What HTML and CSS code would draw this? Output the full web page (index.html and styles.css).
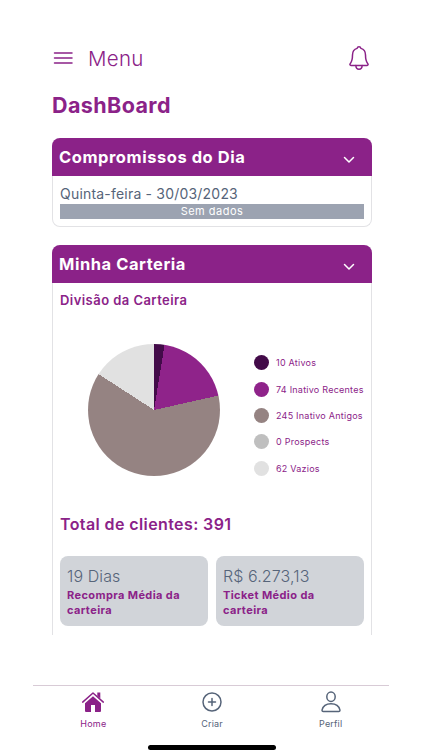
FILE: index.html
```html
<!DOCTYPE html>
<html lang="pt-BR">

<head>
    <meta charset="UTF-8">
    <meta name="viewport" content="width=device-width, initial-scale=1.0">
    <title>DashBoard</title>
    <link rel="stylesheet" href="styles.css">
</head>

<body>
    <div class="app">
        <header class="topbar">
            <svg class="menu-icon" width="20" height="14" viewBox="0 0 20 14">
                <path d="M1.500 1.900h17.500M1.500 7h17.500M1.500 12.100h17.500" />
            </svg>
            <span class="menu-title">Menu</span>
            <svg class="bell-icon" width="22" height="26" viewBox="0 0 22 26">
                <path d="M11 1.800c-1 0-1.700.7-1.900 1.600C6 4.300 4.500 6.800 4.500 10c0 5-.8 6.800-2.300 8.700-.6.800-.3 1.700.7 1.700h16.200c1 0 1.300-.9.700-1.700-1.500-1.900-2.300-3.700-2.300-8.700 0-3.200-1.500-5.700-4.600-6.600C12.700 2.500 12 1.800 11 1.800z" />
                <path d="M7.900 20.600c0 2.400 1.200 3.700 3.100 3.700s3.100-1.300 3.100-3.700" />
            </svg>
        </header>

        <main class="content">
            <h1>DashBoard</h1>

            <!-- Compromissos -->
            <section class="card">
                <div class="card-header">
                    <h2>Compromissos do Dia</h2>
                    <svg class="chevron" width="12" height="8" viewBox="0 0 12 8"><path d="M1.500 1.500L6 6l4.500-4.500" /></svg>
                </div>
                <div class="card-body">
                    <p class="date">Quinta-feira - 30/03/2023</p>
                    <p class="empty">Sem dados</p>
                </div>
            </section>

            <!-- Carteira -->
            <section class="card card-open">
                <div class="card-header">
                    <h2>Minha Carteria</h2>
                    <svg class="chevron" width="12" height="8" viewBox="0 0 12 8"><path d="M1.500 1.500L6 6l4.500-4.500" /></svg>
                </div>
                <div class="card-body">
                    <h3>Divisão da Carteira</h3>
                    <div class="chart">
                        <div class="pie"></div>
                        <ul class="legend">
                            <li><span class="dot ativos"></span>10 Ativos</li>
                            <li><span class="dot recentes"></span>74 Inativo Recentes</li>
                            <li><span class="dot antigos"></span>245 Inativo Antigos</li>
                            <li><span class="dot prospects"></span>0 Prospects</li>
                            <li><span class="dot vazios"></span>62 Vazios</li>
                        </ul>
                    </div>
                    <p class="total">Total de clientes: 391</p>
                    <div class="stats">
                        <div class="stat">
                            <p class="value">19 Dias</p>
                            <p class="label">Recompra Média da carteira</p>
                        </div>
                        <div class="stat">
                            <p class="value">R$ 6.273,13</p>
                            <p class="label">Ticket Médio da carteira</p>
                        </div>
                    </div>
                </div>
            </section>
        </main>

        <nav class="tabs">
            <a class="tab active">
                <svg width="24" height="24" viewBox="0 0 24 24">
                    <path class="fill" d="M12 6.300L4 13.200V21a1 1 0 0 0 1 1h5v-7h4v7h5a1 1 0 0 0 1-1v-7.800z" />
                    <path class="fill" d="M16.300 2.500h3v6l-3-2.600z" />
                    <path class="roof" d="M1.700 12.100L12 3l10.300 9.100" />
                </svg>
                <span>Home</span>
            </a>
            <a class="tab">
                <svg width="24" height="24" viewBox="0 0 24 24">
                    <circle cx="12" cy="12" r="9" />
                    <path d="M12 8.500v7M8.500 12h7" />
                </svg>
                <span>Criar</span>
            </a>
            <a class="tab">
                <svg width="24" height="24" viewBox="0 0 24 24">
                    <ellipse cx="12" cy="6.700" rx="4.200" ry="4.700" />
                    <path d="M12 13.700c-4.600 0-8.100 2.400-8.900 6.200-.2 1 .3 1.700 1.200 1.700h15.400c.9 0 1.400-.7 1.200-1.700-.8-3.800-4.300-6.200-8.900-6.200z" />
                </svg>
                <span>Perfil</span>
            </a>
        </nav>
        <div class="home-indicator"></div>
    </div>
</body>

</html>
```

FILE: styles.css
```css
* {
    box-sizing: border-box;
    margin: 0;
    padding: 0;
}

body {
    background-color: #fff;
    font-family: Inter, "Liberation Sans", sans-serif;
    color: #8b2288;
}

.app {
    display: flex;
    flex-direction: column;
    width: 356px;
    height: 750px;
    margin-left: 33px;
    overflow: hidden;
}

svg {
    fill: none;
    stroke: currentColor;
    stroke-width: 1.5;
    stroke-linecap: round;
    stroke-linejoin: round;
}

/* Top bar */
.topbar {
    display: flex;
    align-items: center;
    flex: none;
    height: 32px;
    margin-top: 42px;
    padding: 0 19px 0 20px;
}

.menu-title {
    margin-left: 15px;
    font-size: 20.5px;
    font-weight: 300;
    letter-spacing: 0.3px;
}

.bell-icon {
    margin-left: auto;
}

/* Content */
.content {
    height: 561px;
    padding: 0 17px 0 19px;
    overflow: hidden;
}

h1 {
    margin-top: 17px;
    font-size: 21.5px;
    line-height: 28px;
    font-weight: 700;
    letter-spacing: 0.4px;
}

.card {
    margin-top: 19px;
    border: 1px solid #e2e2e5;
    border-top: none;
    border-radius: 8px;
}

.card-header {
    display: flex;
    align-items: center;
    justify-content: space-between;
    height: 38px;
    margin: 0 -1px;
    padding: 0 17px 0 7px;
    border-radius: 8px 8px 0 0;
    background-color: #8b2288;
    color: #fff;
}

.card-header h2 {
    font-size: 16.5px;
    line-height: 24px;
    font-weight: 700;
    letter-spacing: 0.55px;
}

.chevron {
    margin-top: 6px;
}

.card-body {
    padding: 8px 7px 7px;
}

.date {
    font-size: 14px;
    line-height: 20px;
    letter-spacing: 0.2px;
    color: #566479;
}

.empty {
    height: 15px;
    background-color: #9ca3b1;
    color: #fff;
    font-size: 11px;
    line-height: 15px;
    letter-spacing: 0.5px;
    text-align: center;
}

.card-open {
    height: 500px;
    margin-top: 18px;
}

h3 {
    font-size: 13px;
    line-height: 19px;
    font-weight: 600;
    letter-spacing: 0.45px;
}

.chart {
    display: flex;
    align-items: center;
    margin-top: 34px;
    padding-left: 28px;
}

.pie {
    width: 132px;
    height: 132px;
    border-radius: 50%;
    background: conic-gradient(#430b49 0 2.56%, #8f238a 2.56% 21.48%, #958382 21.48% 84.14%, #e1e1e1 84.14%);
}

.legend {
    display: flex;
    flex-direction: column;
    gap: 11.4px;
    margin: 11px 0 0 34px;
    list-style: none;
    white-space: nowrap;
}

.legend li {
    display: flex;
    align-items: center;
    gap: 7px;
    height: 15px;
    font-size: 9px;
    letter-spacing: 0.24px;
}

.dot {
    width: 15px;
    height: 15px;
    border-radius: 50%;
}

.ativos { background-color: #430b49; }
.recentes { background-color: #8f238a; }
.antigos { background-color: #958382; }
.prospects { background-color: #bfbfbf; }
.vazios { background-color: #e1e1e1; }

.total {
    margin-top: 36px;
    font-size: 16px;
    line-height: 24px;
    font-weight: 600;
    letter-spacing: 0.4px;
}

.stats {
    display: grid;
    grid-template-columns: 1fr 1fr;
    gap: 8px;
    margin-top: 19.500px;
}

.stat {
    height: 70px;
    padding: 8.500px 20px 0 7px;
    border-radius: 8px;
    background-color: #d1d4d9;
}

.value {
    font-size: 16px;
    line-height: 24px;
    font-weight: 300;
    letter-spacing: 0.1px;
    color: #566479;
    white-space: nowrap;
}

.label {
    font-size: 11px;
    line-height: 14.5px;
    font-weight: 700;
    letter-spacing: 0.4px;
}

/* Bottom tabs */
.tabs {
    display: flex;
    flex: none;
    height: 60px;
    margin: 50px -1px 0 0;
    padding-left: 1px;
    border-top: 1px solid #d8cbd6;
}

.tab {
    display: flex;
    flex: 1;
    flex-direction: column;
    align-items: center;
    padding-top: 4px;
    color: #566479;
    font-size: 9px;
    line-height: 12px;
    letter-spacing: 0.2px;
}

.tab span {
    margin-top: 4px;
}

.tab.active {
    color: #8b2288;
}

.tab .fill {
    fill: currentColor;
    stroke: none;
}

.home-indicator {
    flex: none;
    width: 128px;
    height: 5px;
    margin-left: 115px;
    border-radius: 3px;
    background-color: #000;
}
```
